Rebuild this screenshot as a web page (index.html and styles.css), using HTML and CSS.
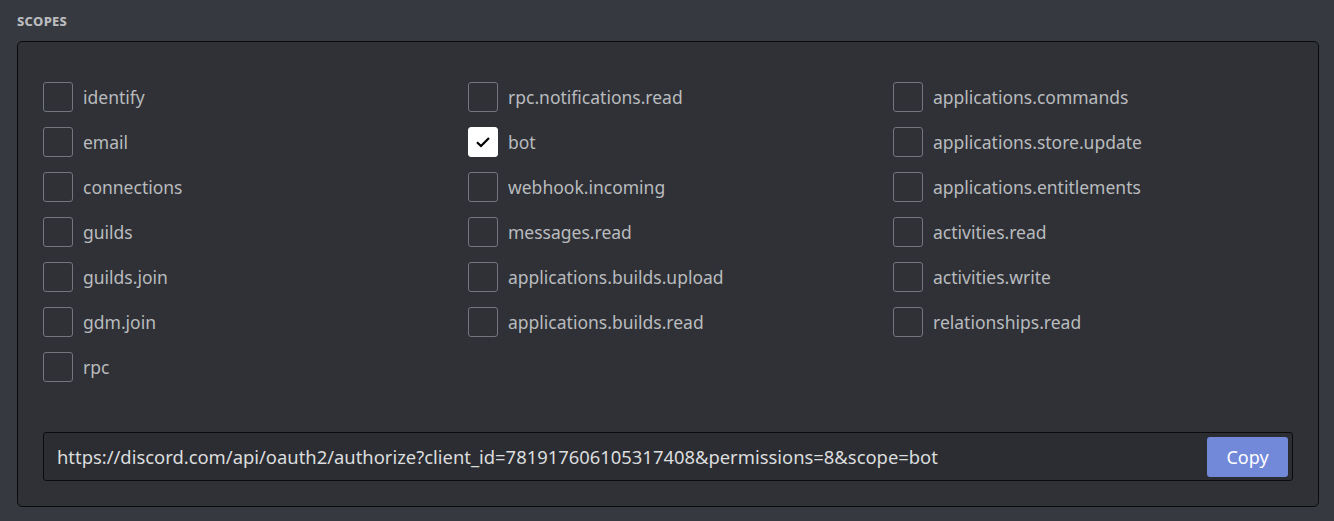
FILE: index.html
```html
<!DOCTYPE html>
<html>
<head>
<meta charset="utf-8">
<link rel="stylesheet" href="styles.css">
</head>
<body>
<div class="page">
  <h5 class="title">Scopes</h5>
  <div class="panel">
    <div class="grid">
      <label class="opt"><span class="box"></span><span class="lbl">identify</span></label>
      <label class="opt"><span class="box"></span><span class="lbl">rpc.notifications.read</span></label>
      <label class="opt"><span class="box"></span><span class="lbl">applications.commands</span></label>

      <label class="opt"><span class="box"></span><span class="lbl">email</span></label>
      <label class="opt"><span class="box checked"><svg width="18" height="18" viewBox="0 0 18 18"><path d="M3 9.3 L7 13 L15 5" fill="none" stroke="#000" stroke-width="2.2"/></svg></span><span class="lbl">bot</span></label>
      <label class="opt"><span class="box"></span><span class="lbl">applications.store.update</span></label>

      <label class="opt"><span class="box"></span><span class="lbl">connections</span></label>
      <label class="opt"><span class="box"></span><span class="lbl">webhook.incoming</span></label>
      <label class="opt"><span class="box"></span><span class="lbl">applications.entitlements</span></label>

      <label class="opt"><span class="box"></span><span class="lbl">guilds</span></label>
      <label class="opt"><span class="box"></span><span class="lbl">messages.read</span></label>
      <label class="opt"><span class="box"></span><span class="lbl">activities.read</span></label>

      <label class="opt"><span class="box"></span><span class="lbl">guilds.join</span></label>
      <label class="opt"><span class="box"></span><span class="lbl">applications.builds.upload</span></label>
      <label class="opt"><span class="box"></span><span class="lbl">activities.write</span></label>

      <label class="opt"><span class="box"></span><span class="lbl">gdm.join</span></label>
      <label class="opt"><span class="box"></span><span class="lbl">applications.builds.read</span></label>
      <label class="opt"><span class="box"></span><span class="lbl">relationships.read</span></label>

      <label class="opt"><span class="box"></span><span class="lbl">rpc</span></label>
    </div>
    <div class="urlbox">
      <div class="url">https://discord.com/api/oauth2/authorize?client_id=781917606105317408&amp;permissions=8&amp;scope=bot</div>
      <button class="copy">Copy</button>
    </div>
  </div>
</div>
</body>
</html>
```

FILE: styles.css
```css
html, body {
  margin: 0;
  padding: 0;
  background: #36393f;
  font-family: "Noto Sans", "Open Sans", sans-serif;
}
.page {
  padding: 12px 15px 0 17px;
}
.title {
  margin: 0 0 11px 0;
  font-size: 13px;
  font-weight: 800;
  text-transform: uppercase;
  color: #b9bbbe;
  line-height: 18px;
  letter-spacing: 0.3px;
}
.panel {
  background: #2f3136;
  border: 1px solid #0a0b0c;
  border-radius: 5px;
  padding: 40px 25px 25px 25px;
}
.grid {
  display: grid;
  grid-template-columns: repeat(3, 400px);
  column-gap: 25px;
  row-gap: 15px;
}
.opt {
  display: flex;
  align-items: center;
  gap: 10px;
  height: 30px;
}
.box {
  box-sizing: border-box;
  width: 30px;
  height: 30px;
  border: 1px solid #72767d;
  border-radius: 3px;
  display: flex;
  align-items: center;
  justify-content: center;
  flex: none;
}
.box.checked {
  background: #ffffff;
  border-color: #ffffff;
}
.lbl {
  color: #b9bbbe;
  font-size: 17.5px;
  line-height: 20px;
}
.urlbox {
  margin-top: 50px;
  box-sizing: border-box;
  height: 49px;
  display: flex;
  align-items: center;
  border: 1px solid #0a0b0c;
  border-radius: 3px;
  background: #2b2d32;
  padding: 4px;
}
.url {
  flex: 1;
  color: #dcddde;
  font-size: 18.4px;
  padding-left: 9px;
}
.copy {
  width: 81px;
  height: 40px;
  border: none;
  border-radius: 3px;
  background: #7289da;
  color: #ffffff;
  font-family: "Noto Sans", "Open Sans", sans-serif;
  font-size: 18px;
  padding: 0;
}
```
